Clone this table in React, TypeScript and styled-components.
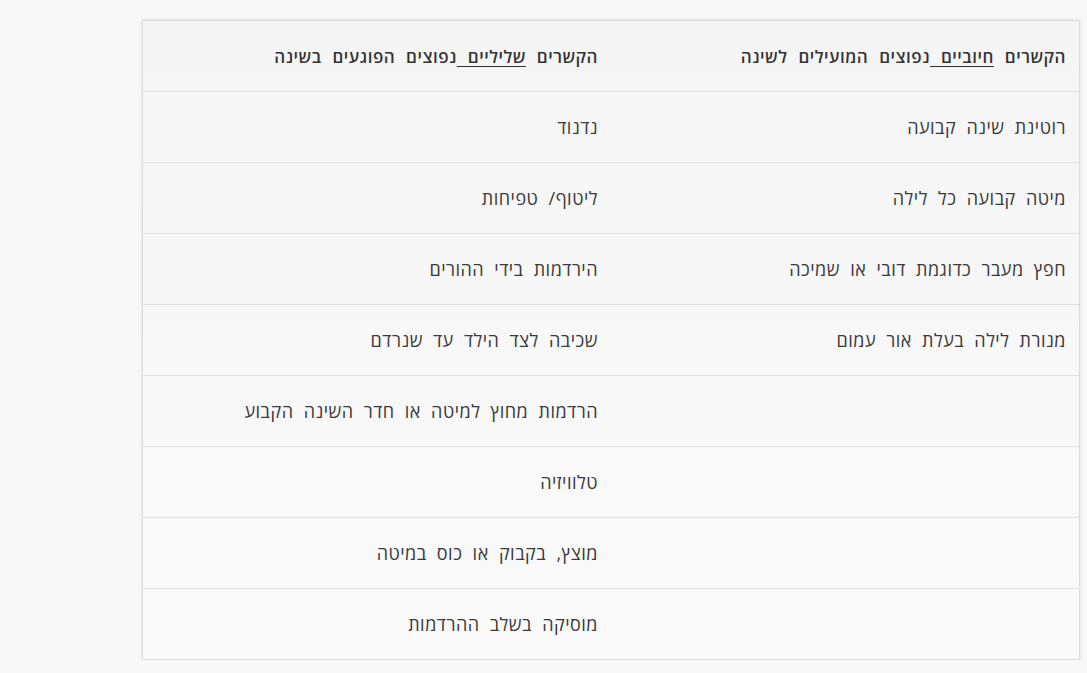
import styled, { createGlobalStyle } from "styled-components"

const positives = [
    "רוטינת שינה קבועה",
    "מיטה קבועה כל לילה",
    "חפץ מעבר כדוגמת דובי או שמיכה",
    "מנורת לילה בעלת אור עמום",
]

const negatives = [
    "נדנוד",
    "ליטוף/ טפיחות",
    "הירדמות בידי ההורים",
    "שכיבה לצד הילד עד שנרדם",
    "הרדמות מחוץ למיטה או חדר השינה הקבוע",
    "טלוויזיה",
    "מוצץ, בקבוק או כוס במיטה",
    "מוסיקה בשלב ההרדמות",
]

const GlobalStyle = createGlobalStyle`
    html, body {
        margin: 0;
        background: #f8f8f8;
    }
    body {
        font-family: "Open Sans", "Noto Sans", "DejaVu Sans", sans-serif;
        color: #333;
    }
`

export default function App(){
    const rows = Math.max(positives.length, negatives.length)
    return (
        <>
            <GlobalStyle />
            <Page>
                <Table dir="rtl">
                    <thead>
                        <tr>
                            <Head>הקשרים <u>חיוביים </u>נפוצים המועילים לשינה</Head>
                            <Head>הקשרים <u>שליליים </u>נפוצים הפוגעים בשינה</Head>
                        </tr>
                    </thead>
                    <tbody>
                        {
                            Array.from({length: rows}).map((_, index) => (
                                <tr key={index}>
                                    <Cell>{positives[index] ?? ""}</Cell>
                                    <Cell>{negatives[index] ?? ""}</Cell>
                                </tr>
                            ))
                        }
                    </tbody>
                </Table>
            </Page>
        </>
    )
}

const Page = styled.div`
    padding: 20px 0 0 142px;
`

const Table = styled.table`
    width: 938px;
    border-collapse: collapse;
    table-layout: fixed;
    background: linear-gradient(#f5f5f5, #fafafa);
    border: 1px solid #dcdcdc;
    box-shadow: 0 0 3px rgba(0, 0, 0, 0.12);
`

const Head = styled.th`
    height: 70px;
    padding: 0 13px;
    text-align: right;
    font-size: 17px;
    font-weight: 600;
    letter-spacing: 0.5px;
    word-spacing: 6px;
    color: #333;
    border-bottom: 1px solid #e0e0e0;

    & u {
        text-underline-offset: 3px;
    }
`

const Cell = styled.td`
    height: 70px;
    padding: 0 13px;
    text-align: right;
    font-size: 18px;
    letter-spacing: 0.5px;
    word-spacing: 5px;
    color: #3a3a3a;
    border-bottom: 1px solid #e0e0e0;

    tr:last-child > & {
        border-bottom: 0;
    }
`
